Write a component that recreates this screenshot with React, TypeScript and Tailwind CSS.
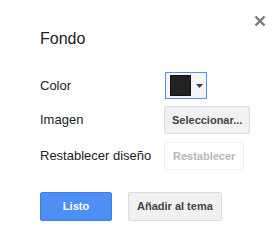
export default function App() {
  return (
    <main className="relative w-[279px] h-[249px] bg-white font-['Liberation_Sans',Arial,sans-serif] text-[#222]">
      {/* close */}
      <button className="absolute left-[253px] top-[14px] w-[13px] h-[13px] flex items-center justify-center">
        <svg width="12" height="12" viewBox="0 0 12 12">
          <path d="M1.5 1.5 L10.5 10.5 M10.5 1.5 L1.5 10.5" stroke="#7a7a7a" strokeWidth="2.4" />
        </svg>
      </button>

      <div className="pl-10 pt-[29px]">
        <h2 className="text-[16px] leading-[20px] font-normal">Fondo</h2>

        <div className="mt-[23px] grid grid-cols-[125px_auto] gap-y-[7px] items-center text-[13px]">
          <span>Color</span>
          <div>
            <button className="flex items-center w-[42px] h-[27px] border border-[#4d90fe] bg-[#f5f5f5] pl-[4px] gap-[5px]">
              <span className="w-[21px] h-[21px] bg-[#222] border border-[#111]" />
              <svg width="7" height="4" viewBox="0 0 7 4">
                <path d="M0 0 H7 L3.5 4 Z" fill="#2c3e6b" />
              </svg>
            </button>
          </div>

          <span>Imagen</span>
          <div>
            <button className="h-[28px] px-[7px] -ml-px border border-[#dcdcdc] bg-[#f1f1f1] rounded-[2px] text-[11px] font-bold text-[#444]">
              Seleccionar...
            </button>
          </div>

          <span>Restablecer diseño</span>
          <div className="mt-px">
            <button className="h-[28px] px-[8px] -ml-px border border-[#eeeeee] bg-white rounded-[2px] text-[11px] font-bold text-[#b8b8b8]">
              Restablecer
            </button>
          </div>
        </div>

        <div className="mt-[22px] flex gap-4 text-[11px] font-bold">
          <button className="w-[72px] h-[29px] bg-[#4d8ff5] border border-[#3f7fe8] rounded-[2px] text-white">
            Listo
          </button>
          <button className="h-[29px] px-[8px] bg-[#f1f1f1] border border-[#dcdcdc] rounded-[2px] text-[#444]">
            Añadir al tema
          </button>
        </div>
      </div>
    </main>
  );
}
